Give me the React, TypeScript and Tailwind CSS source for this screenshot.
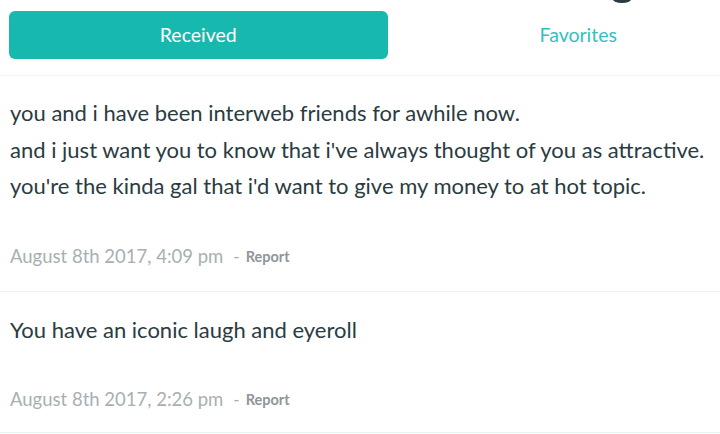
const messages = [
  {
    lines: [
      "you and i have been interweb friends for awhile now.",
      "and i just want you to know that i've always thought of you as attractive.",
      "you're the kinda gal that i'd want to give my money to at hot topic.",
    ],
    date: "August 8th 2017, 4:09 pm",
  },
  {
    lines: ["You have an iconic laugh and eyeroll"],
    date: "August 8th 2017, 2:26 pm",
  },
];

export default function App() {
  return (
    <div
      className="w-[720px] h-[434px] overflow-hidden bg-white"
      style={{ fontFamily: "Lato, 'Noto Sans', sans-serif" }}
    >
      {/* cut-off heading above the tabs */}
      <div className="h-[11px] pl-[613px] overflow-hidden">
        <div className="w-[18px] h-[7px] -mt-[4px] rounded-[50%] bg-[#2b3a40]" />
      </div>

      <div className="w-[777px] px-[9px] pb-[16px] border-b border-[#eef6f6]">
        <div className="grid grid-cols-2 h-[48px]">
          <button className="rounded-md bg-[#17b8ad] text-white text-[19.5px] mr-[1px]">
            Received
          </button>
          <button className="text-[#35bfbd] text-[19.5px]">Favorites</button>
        </div>
      </div>

      <div className="flex flex-col">
        {messages.map((m, i) => (
          <div
            key={i}
            className={`px-[10px] border-b border-[#e6f4f4] ${
              i === 0 ? "pt-[19px] pb-[22px]" : "pt-[20px] pb-[20px]"
            }`}
          >
            <div className="text-[22px] leading-[36.5px] text-[#2a3b42]">
              {m.lines.map((l, j) => (
                <div key={j}>{l}</div>
              ))}
            </div>
            <div className="mt-[40px] flex items-center h-[24px] text-[18.5px] text-[#a8afb2]">
              <span>{m.date}</span>
              <span className="ml-[10px] text-[17px]">-</span>
              <span className="ml-[6px] text-[14.5px] font-bold text-[#8e9699]">Report</span>
            </div>
          </div>
        ))}
      </div>
    </div>
  );
}
